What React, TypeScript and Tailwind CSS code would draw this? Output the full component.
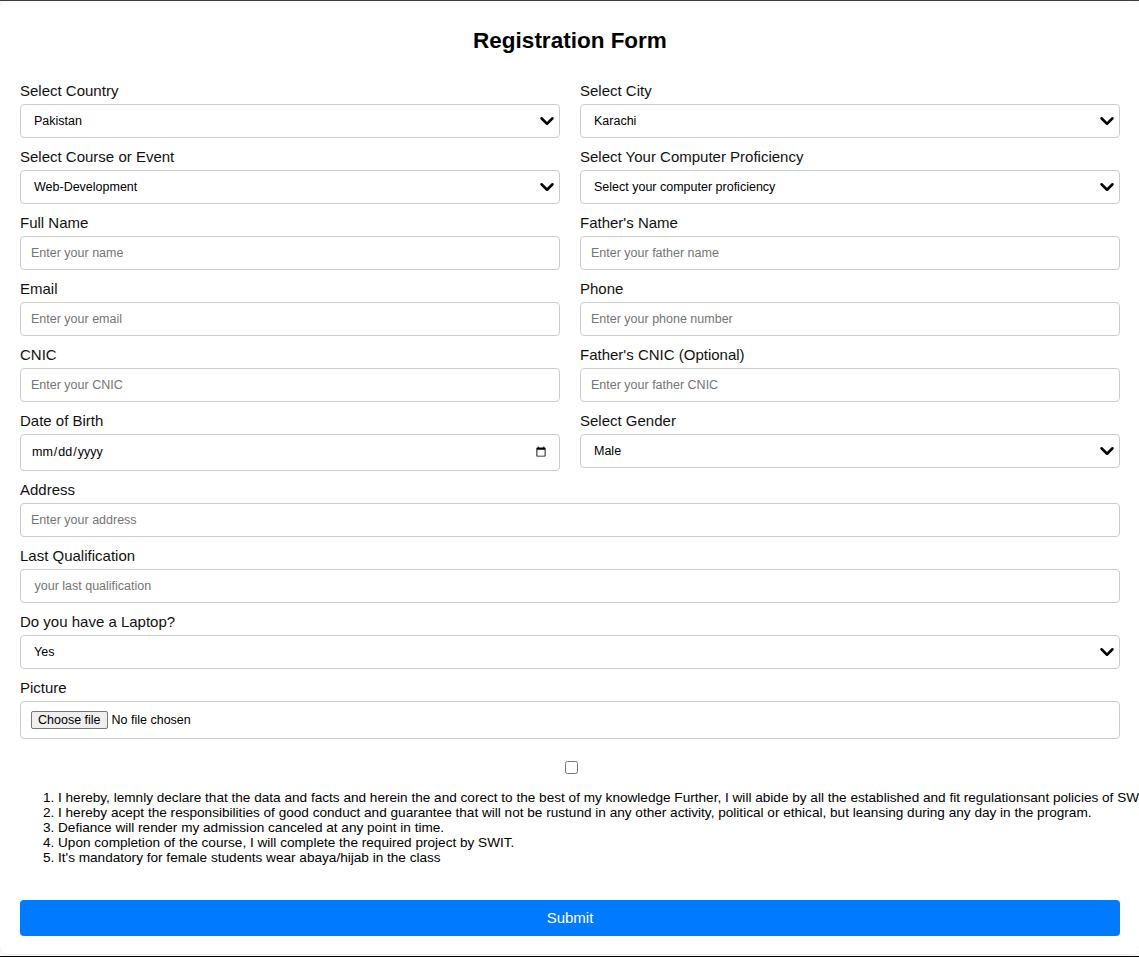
import { ReactNode } from 'react';
import { ChevronDown } from 'lucide-react';

const inputCls =
  'block w-full h-[34px] px-[10px] border border-[#cccccc] rounded-[4px] bg-white text-[12.5px] text-black placeholder:text-[#757575] outline-none';

function Field({ label, children }: { label: string; children: ReactNode }) {
  return (
    <div className="mb-[10px]">
      <label className="block text-[15px] leading-[18px] mb-[4px] text-[#111]">{label}</label>
      {children}
    </div>
  );
}

function Select({ value }: { value: string }) {
  return (
    <div className="relative">
      <select
        className="block w-full h-[34px] pl-[13px] pr-[30px] appearance-none border border-[#cccccc] rounded-[4px] bg-white text-[12.5px] text-black outline-none"
        defaultValue={value}
      >
        <option value={value}>{value}</option>
      </select>
      <ChevronDown
        size={22}
        strokeWidth={2.7}
        className="absolute right-[2px] top-[6px] pointer-events-none text-black"
      />
    </div>
  );
}

const TERMS = [
  'I hereby, lemnly declare that the data and facts and herein the and corect to the best of my knowledge Further, I will abide by all the established and fit regulationsant policies of SWIT.',
  'I hereby acept the responsibilities of good conduct and guarantee that will not be rustund in any other activity, political or ethical, but leansing during any day in the program.',
  'Defiance will render my admission canceled at any point in time.',
  'Upon completion of the course, I will complete the required project by SWIT.',
  "It's mandatory for female students wear abaya/hijab in the class",
];

export default function App() {
  return (
    <div
      className="w-full h-[957px] overflow-hidden bg-white border-t border-t-[#3a3f44] border-b border-b-black"
      style={{ fontFamily: '"Liberation Sans", Arial, sans-serif' }}
    >
      <form className="w-[1140px] min-h-[953px] bg-white rounded-[8px] shadow-[0_0_6px_rgba(0,0,0,0.12)] px-[20px] pt-[20px] pb-[16px]">
        <h2 className="text-center text-[22.5px] leading-[28px] font-bold mt-[6px] mb-[27px] text-black">
          Registration Form
        </h2>

        <div className="grid grid-cols-2 gap-x-[20px]">
          <Field label="Select Country">
            <Select value="Pakistan" />
          </Field>
          <Field label="Select City">
            <Select value="Karachi" />
          </Field>
          <Field label="Select Course or Event">
            <Select value="Web-Development" />
          </Field>
          <Field label="Select Your Computer Proficiency">
            <Select value="Select your computer proficiency" />
          </Field>
          <Field label="Full Name">
            <input className={inputCls} placeholder="Enter your name" />
          </Field>
          <Field label="Father's Name">
            <input className={inputCls} placeholder="Enter your father name" />
          </Field>
          <Field label="Email">
            <input className={inputCls} placeholder="Enter your email" />
          </Field>
          <Field label="Phone">
            <input className={inputCls} placeholder="Enter your phone number" />
          </Field>
          <Field label="CNIC">
            <input className={inputCls} placeholder="Enter your CNIC" />
          </Field>
          <Field label="Father's CNIC (Optional)">
            <input className={inputCls} placeholder="Enter your father CNIC" />
          </Field>
          <Field label="Date of Birth">
            <input
              type="date"
              className="block w-full h-[37px] px-[10px] border border-[#cccccc] rounded-[4px] bg-white text-[12.5px] text-black outline-none"
            />
          </Field>
          <Field label="Select Gender">
            <Select value="Male" />
          </Field>
        </div>

        <Field label="Address">
          <input className={inputCls} placeholder="Enter your address" />
        </Field>
        <Field label="Last Qualification">
          <input className={inputCls} placeholder=" your last qualification" />
        </Field>
        <Field label="Do you have a Laptop?">
          <Select value="Yes" />
        </Field>
        <Field label="Picture">
          <label className="flex items-center w-full h-[38px] px-[10px] border border-[#cccccc] rounded-[4px] bg-white text-[12.5px] text-black">
            <input type="file" className="hidden" />
            <span className="inline-flex items-center h-[18px] px-[6px] border border-[#767676] bg-[#efefef] rounded-[2px] mr-[4px]">
              Choose file
            </span>
            <span>No file chosen</span>
          </label>
        </Field>

        <div className="flex justify-center pt-[12px]">
          <input type="checkbox" className="w-[13px] h-[13px] ml-[3px]" />
        </div>

        <ol className="list-decimal pl-[38px] mt-[16px] mb-[35px] text-[13.6px] leading-[15px] text-black">
          {TERMS.map((t, i) => (
            <li key={i} className="whitespace-nowrap">
              {t}
            </li>
          ))}
        </ol>

        <button
          type="button"
          className="block w-full h-[36px] rounded-[4px] bg-[#007bff] text-white text-[15px]"
        >
          Submit
        </button>
      </form>
    </div>
  );
}
